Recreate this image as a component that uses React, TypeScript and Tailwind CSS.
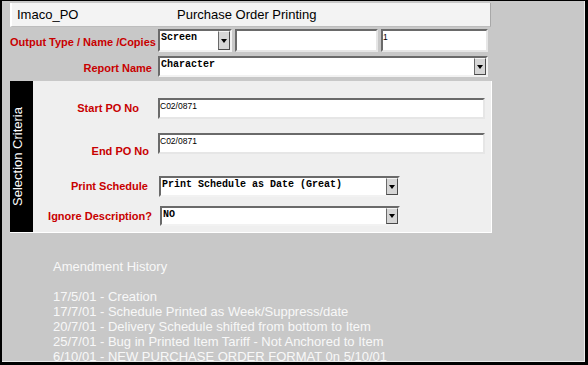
import React from "react";

const sans = { fontFamily: '"Liberation Sans", Arial, sans-serif' };
const mono = { fontFamily: '"Liberation Mono", "Courier New", monospace' };

function DropBtn() {
  return (
    <div className="w-[12px] h-full flex items-center justify-center bg-[#d6d6d6] border border-t-[#f4f4f4] border-l-[#6a6a6a] border-b-[#4a4a4a] border-r-[#4a4a4a]">
      <div className="w-0 h-0 border-l-[3px] border-r-[3px] border-t-[4px] border-l-transparent border-r-transparent border-t-black" />
    </div>
  );
}

function Select({ w, h, text }: { w: string; h: string; text: string }) {
  return (
    <div
      className={`${w} ${h} flex bg-white border-2 border-t-[#6a6a6a] border-l-[#6a6a6a] border-b-[#f2f2f2] border-r-[#f2f2f2]`}
    >
      <div className="flex-1 pl-[1px] pt-[1px] text-[10px] leading-[12px] font-bold text-black whitespace-pre overflow-hidden" style={mono}>
        {text}
      </div>
      <DropBtn />
    </div>
  );
}

function Input({ w, h, text }: { w: string; h: string; text?: string }) {
  return (
    <div
      className={`${w} ${h} bg-white border-2 border-t-[#6a6a6a] border-l-[#6a6a6a] border-b-[#e6e6e6] border-r-[#e6e6e6] pt-[1px] text-[8.5px] leading-[10px] text-black`}
      style={sans}
    >
      {text}
    </div>
  );
}

const label = "text-right text-[11px] leading-[13px] font-bold text-[#c80000] whitespace-nowrap";

export default function App() {
  return (
    <div className="w-[588px] h-[365px] border-t border-l-2 border-r-[3px] border-b-[3px] border-black bg-[#c8c8c8] overflow-hidden" style={sans}>
      <div className="w-full h-full border-r border-b border-[#ececec] flex flex-col pl-[8px] pt-[2px] overflow-hidden">
        {/* Title */}
        <div className="w-[481px] h-[24px] shrink-0 flex items-center bg-[#f3f3f3] border-l-2 border-l-white border-r border-r-[#a8a8a8] border-b border-b-[#bdbdbd] pl-[5px] text-[13px] text-black">
          <span className="w-[160px]">Imaco_PO</span>
          <span>Purchase Order Printing</span>
        </div>

        {/* Row 1 */}
        <div className="flex h-[23px] mt-[2px] shrink-0">
          <div className={`w-[148px] pr-[3px] pt-[7px] ${label}`}>Output Type / Name /Copies</div>
          <Select w="w-[74px]" h="h-[23px]" text="Screen" />
          <div className="ml-[3px]"><Input w="w-[143px]" h="h-[23px]" /></div>
          <div className="ml-[3px]"><Input w="w-[107px]" h="h-[23px]" text="1" /></div>
        </div>

        {/* Row 2 */}
        <div className="flex h-[21px] mt-[4px] shrink-0">
          <div className={`w-[148px] pr-[6px] pt-[6px] ${label}`}>Report Name</div>
          <Select w="w-[330px]" h="h-[21px]" text="Character" />
        </div>

        {/* Selection criteria panel */}
        <div className="flex w-[482px] h-[152px] mt-[4px] shrink-0 bg-[#efefef] border-r border-b border-white">
          <div className="w-[23px] h-full bg-black flex items-center justify-start">
            <div
              className="text-white text-[13px] leading-[15px] whitespace-nowrap rotate-180"
              style={{ writingMode: "vertical-rl" }}
            >
              Selection Criteria
            </div>
          </div>
          <div className="flex-1 flex flex-col pt-[17px]">
            <div className="flex items-center h-[21px]">
              <div className={`w-[125px] pr-[19px] ${label}`}>Start PO No</div>
              <Input w="w-[327px]" h="h-[21px]" text="C02/0871" />
            </div>
            <div className="flex items-end h-[21px] mt-[14px]">
              <div className={`w-[125px] pr-[9px] mb-[-4px] ${label}`}>End PO No</div>
              <Input w="w-[327px]" h="h-[21px]" text="C02/0871" />
            </div>
            <div className="flex items-center h-[21px] mt-[22px]">
              <div className={`w-[126px] pr-[11px] ${label}`}>Print Schedule</div>
              <Select w="w-[241px]" h="h-[21px]" text="Print Schedule as Date (Great)" />
            </div>
            <div className="flex items-center h-[20px] mt-[9px]">
              <div className={`w-[127px] pr-[8px] ${label}`}>Ignore Description?</div>
              <Select w="w-[240px]" h="h-[20px]" text="NO" />
            </div>
          </div>
        </div>

        {/* Amendment history */}
        <div className="mt-[26px] pl-[43px] text-[13px] leading-[15px] text-[#f8f8f8] whitespace-nowrap">
          <div>Amendment History</div>
          <div>&nbsp;</div>
          <div>17/5/01 - Creation</div>
          <div>17/7/01 - Schedule Printed as Week/Suppress/date</div>
          <div>20/7/01 - Delivery Schedule shifted from bottom to Item</div>
          <div>25/7/01 - Bug in Printed Item Tariff - Not Anchored to Item</div>
          <div>6/10/01 - NEW PURCHASE ORDER FORMAT 0n 5/10/01</div>
        </div>
      </div>
    </div>
  );
}
